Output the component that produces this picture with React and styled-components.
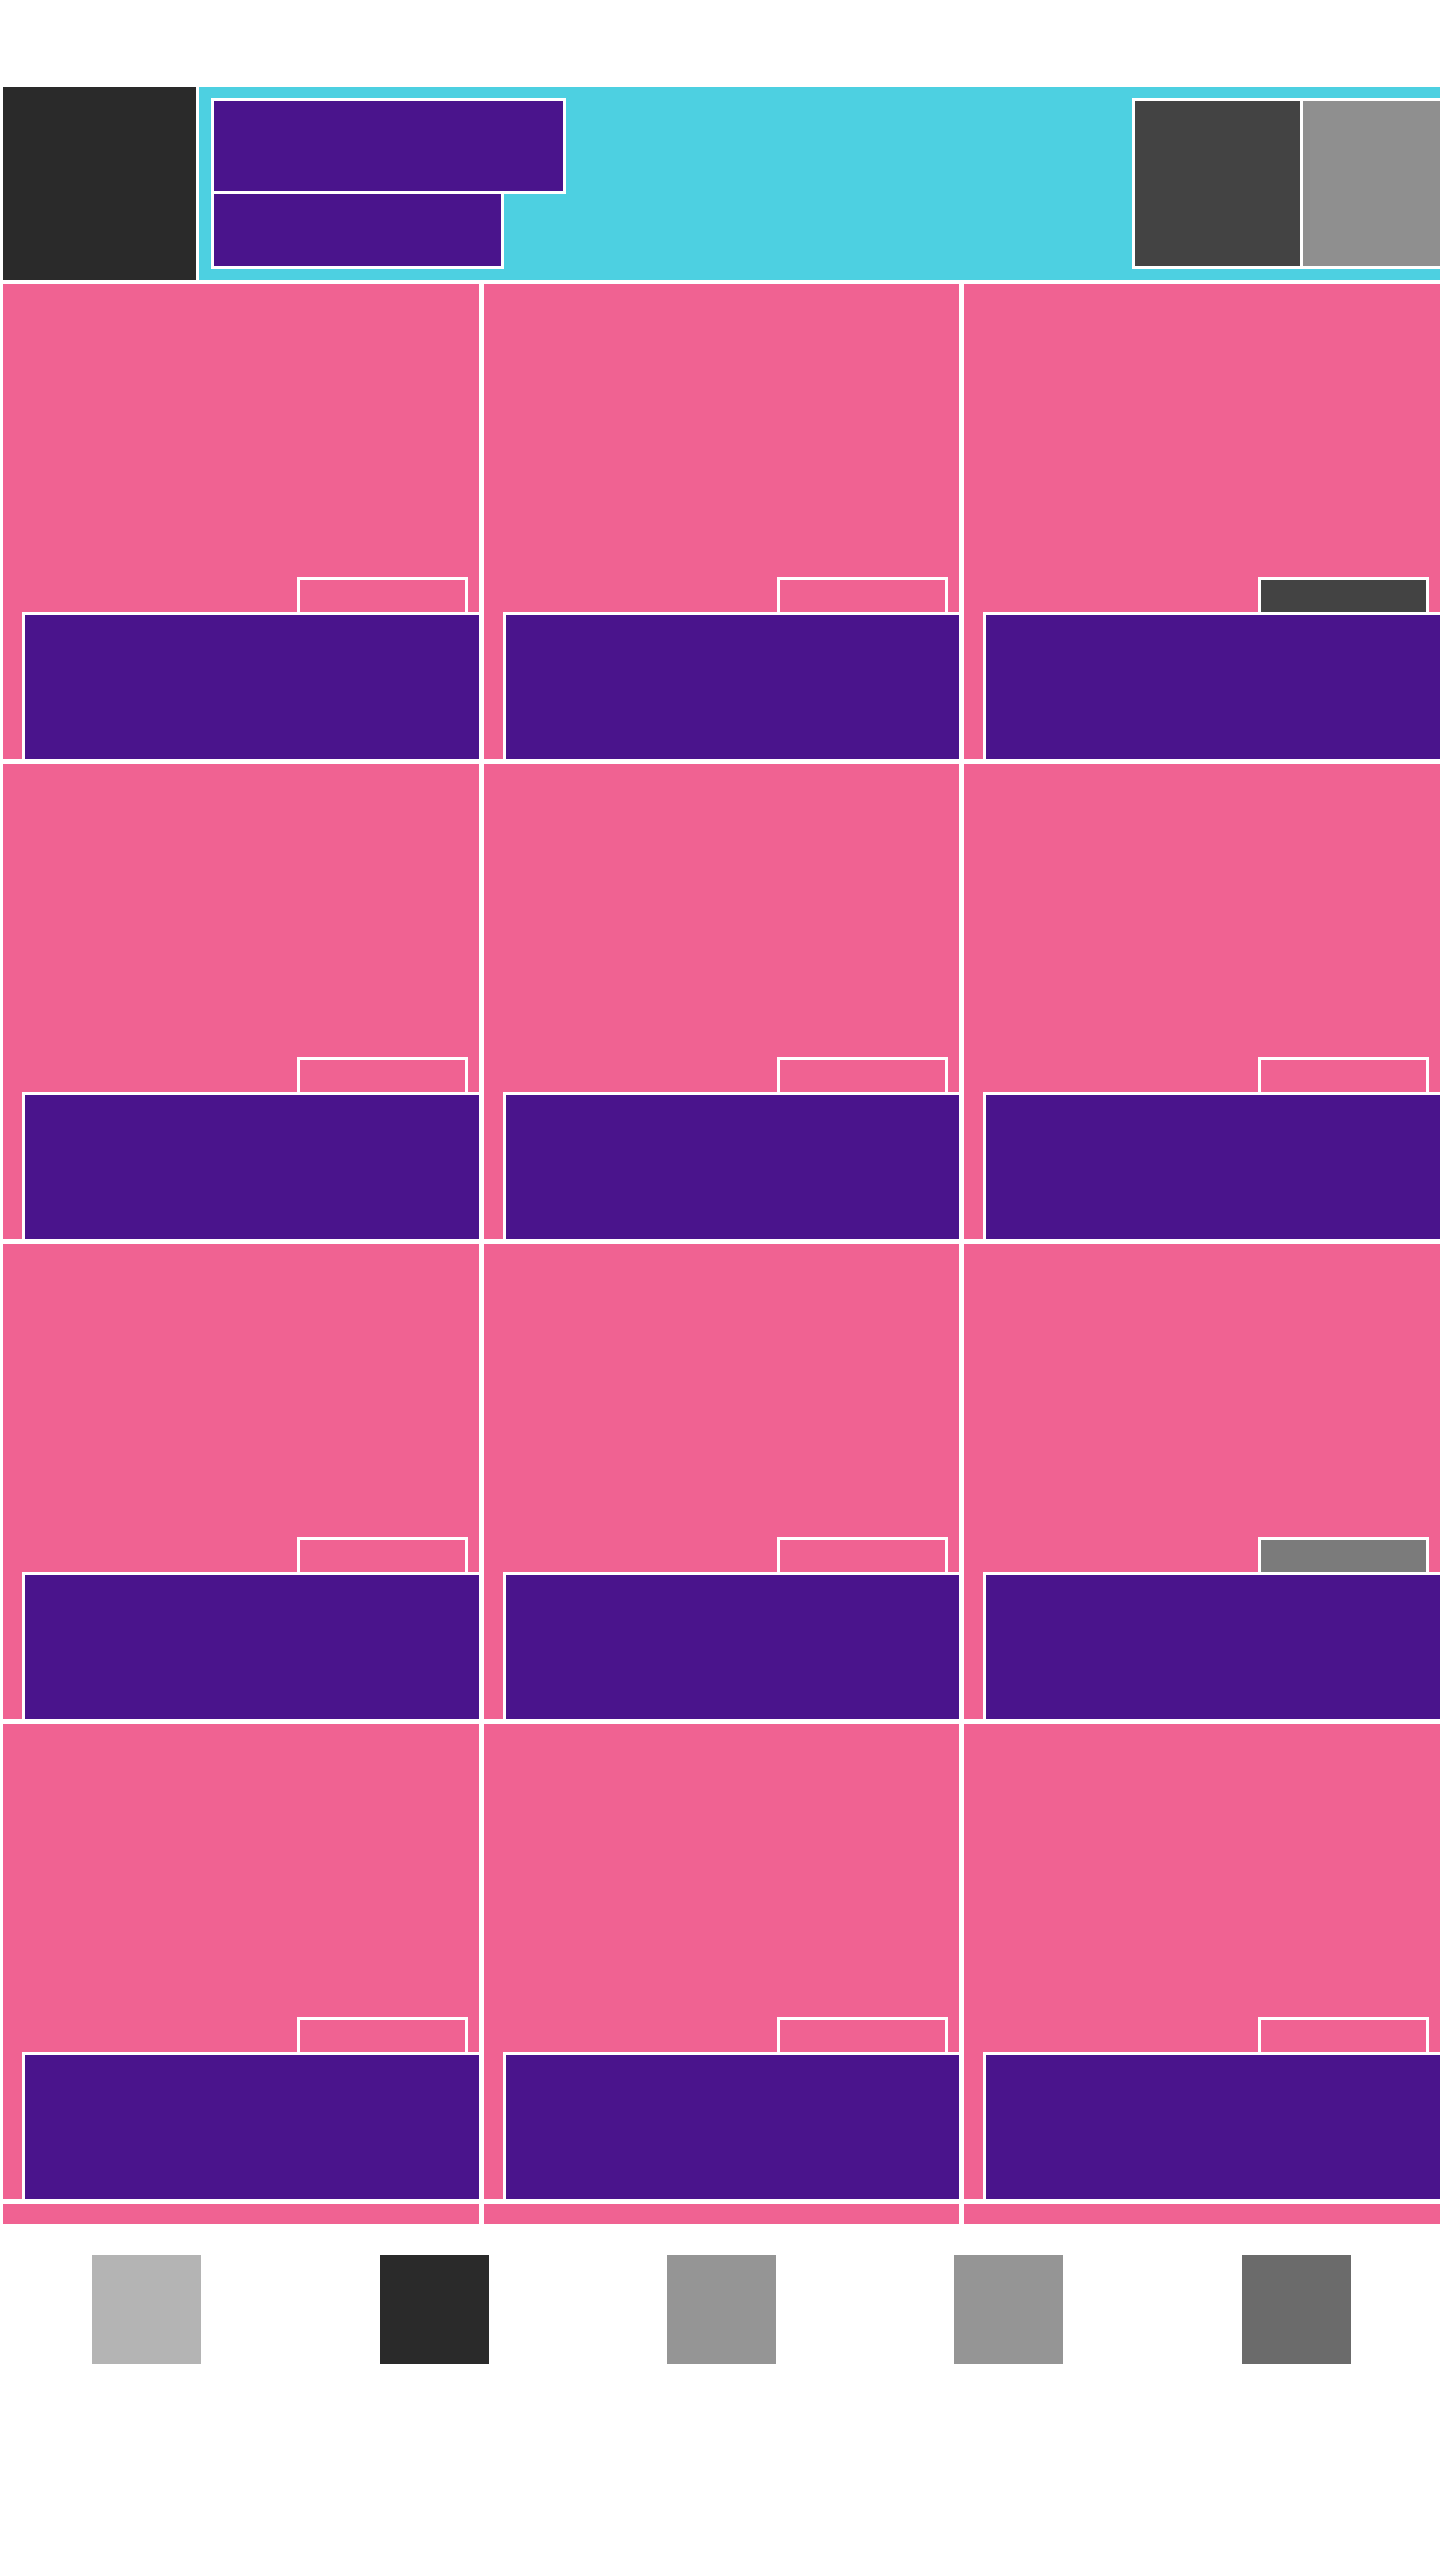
import React from "react";
import styled, { createGlobalStyle } from "styled-components";

function App() {
  return (
    <>
      <GlobalStyle />
      <Page>
        <HeaderBar>
          <LogoBlock />
          <HeaderPanel>
            <TitleColumn>
              <TitleBox />
              <SubtitleBox />
            </TitleColumn>
            <ActionGroup>
              <ActionTile color="#434343" />
              <ActionTile color="#8f8f8f" divided />
            </ActionGroup>
          </HeaderPanel>
        </HeaderBar>
        <CardGrid>
          {cards.map((card) => (
            <Card key={card.id}>
              <CardTab fill={card.tab} />
              <CardBody />
            </Card>
          ))}
        </CardGrid>
        <Footer>
          {footerSwatches.map((color, index) => (
            <FooterCell key={index}>
              <Swatch color={color} />
            </FooterCell>
          ))}
        </Footer>
      </Page>
    </>
  );
}

const GlobalStyle = createGlobalStyle`
  html, body {
    margin: 0;
    padding: 0;
    background: #ffffff;
    overflow-x: hidden;
    font-family: "Liberation Sans", Arial, sans-serif;
  }
  * {
    box-sizing: border-box;
  }
`;

const Page = styled.div`
  width: 1440px;
  padding: 87px 0 0 3px;
  overflow: hidden;
  min-height: 2560px;
`;

const HeaderBar = styled.header`
  display: flex;
  gap: 3px;
  height: 193px;
`;

const LogoBlock = styled.div`
  flex: 0 0 193px;
  height: 193px;
  background: #2a2a2a;
`;

const HeaderPanel = styled.div`
  flex: 1;
  display: flex;
  align-items: flex-start;
  padding: 11px 0 0 12px;
  background: #4dd0e1;
`;

const TitleColumn = styled.div`
  display: flex;
  flex-direction: column;
  flex-shrink: 0;
`;

const TitleBox = styled.div`
  width: 355px;
  height: 96px;
  border: 3px solid #ffffff;
  background: #4a148c;
`;

const SubtitleBox = styled.div`
  width: 293px;
  height: 78px;
  margin-top: -3px;
  border: 3px solid #ffffff;
  background: #4a148c;
`;

const ActionGroup = styled.div`
  display: flex;
  flex-shrink: 0;
  margin-left: auto;
  margin-right: -31px;
  border: 3px solid #ffffff;
  background: #ffffff;
`;

const ActionTile = styled.div`
  width: ${(props) => (props.divided ? "168px" : "165px")};
  height: 165px;
  border-left: ${(props) => (props.divided ? "3px solid #ffffff" : "none")};
  background: ${(props) => props.color};
  background-clip: content-box;
`;

const CardGrid = styled.main`
  display: grid;
  grid-template-columns: repeat(3, 1fr);
  grid-auto-rows: 475px;
  column-gap: 5px;
  row-gap: 5px;
  margin-top: 4px;
  height: 1940px;
  overflow: hidden;
`;

const Card = styled.div`
  display: flex;
  flex-direction: column;
  padding-top: 293px;
  background: #f06292;
  overflow: hidden;
`;

const CardTab = styled.div`
  align-self: flex-end;
  flex-shrink: 0;
  width: 171px;
  height: 35px;
  margin-right: 11px;
  border: 3px solid #ffffff;
  border-bottom: none;
  background: ${(props) => props.fill || "#f06292"};
`;

const CardBody = styled.div`
  flex-shrink: 0;
  width: 480px;
  height: 170px;
  margin-left: 19px;
  border: 3px solid #ffffff;
  background: #4a148c;
`;

const Footer = styled.footer`
  display: grid;
  grid-template-columns: repeat(5, 1fr);
  margin-top: 31px;
`;

const FooterCell = styled.div`
  display: flex;
  justify-content: center;
`;

const Swatch = styled.div`
  width: 109px;
  height: 109px;
  background: ${(props) => props.color};
`;

const cards = [
  { id: 1 },
  { id: 2 },
  { id: 3, tab: "#434343" },
  { id: 4 },
  { id: 5 },
  { id: 6 },
  { id: 7 },
  { id: 8 },
  { id: 9, tab: "#7b7b7b" },
  { id: 10 },
  { id: 11 },
  { id: 12 },
  { id: 13 },
  { id: 14 },
  { id: 15 },
];

const footerSwatches = ["#b4b4b4", "#2a2a2a", "#959595", "#959595", "#6b6b6b"];

export default App;
